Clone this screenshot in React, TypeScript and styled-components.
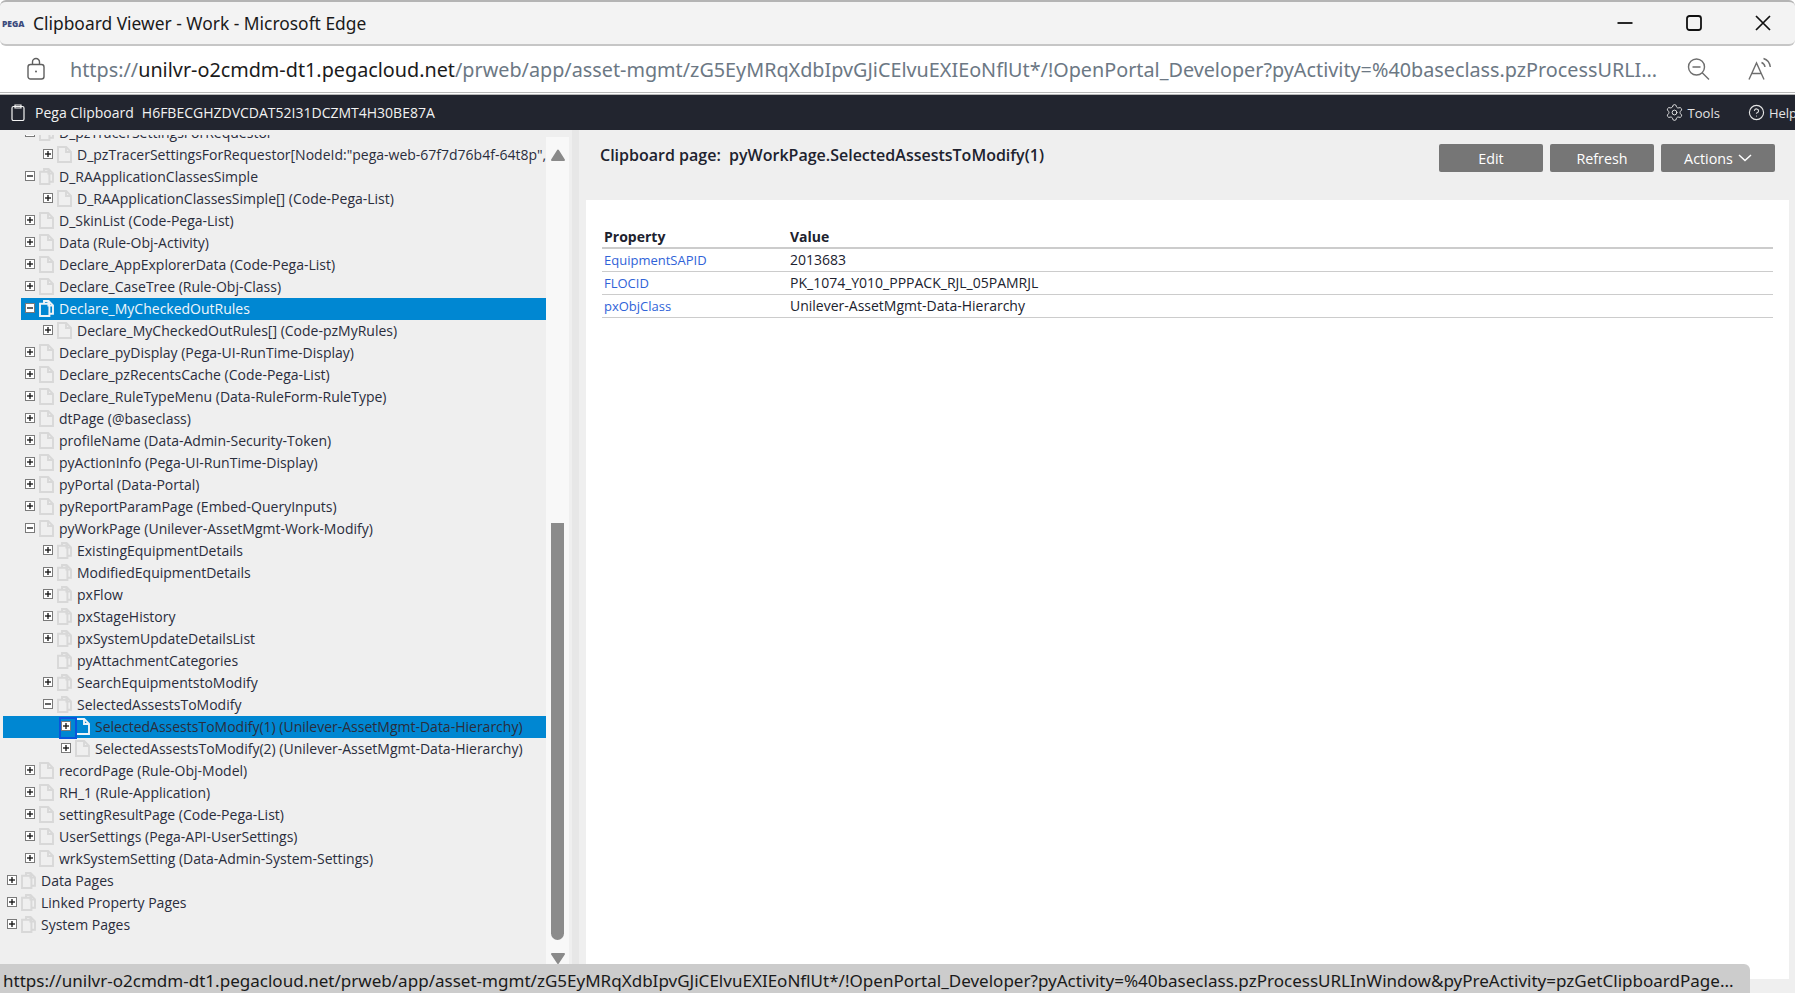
import styled, { createGlobalStyle } from "styled-components";
import { Settings, CircleHelp } from "lucide-react";

const PAGE_URL =
  "https://unilvr-o2cmdm-dt1.pegacloud.net/prweb/app/asset-mgmt/zG5EyMRqXdbIpvGJiCElvuEXIEoNflUt*/!OpenPortal_Developer?pyActivity=%40baseclass.pzProcessURLI...";
const STATUS_URL =
  "https://unilvr-o2cmdm-dt1.pegacloud.net/prweb/app/asset-mgmt/zG5EyMRqXdbIpvGJiCElvuEXIEoNflUt*/!OpenPortal_Developer?pyActivity=%40baseclass.pzProcessURLInWindow&pyPreActivity=pzGetClipboardPage...";

type TreeRow = {
  level: number;
  label: string;
  toggle?: "plus" | "minus";
  stack?: boolean;
  selectedFrom?: number;
  light?: boolean;
  focused?: boolean;
};

const treeRows: TreeRow[] = [
  { level: 1, label: "D_pzTracerSettingsForRequestor", toggle: "minus", stack: true },
  { level: 2, label: 'D_pzTracerSettingsForRequestor[NodeId:"pega-web-67f7d76b4f-64t8p",', toggle: "plus" },
  { level: 1, label: "D_RAApplicationClassesSimple", toggle: "minus", stack: true },
  { level: 2, label: "D_RAApplicationClassesSimple[] (Code-Pega-List)", toggle: "plus" },
  { level: 1, label: "D_SkinList (Code-Pega-List)", toggle: "plus" },
  { level: 1, label: "Data (Rule-Obj-Activity)", toggle: "plus" },
  { level: 1, label: "Declare_AppExplorerData (Code-Pega-List)", toggle: "plus" },
  { level: 1, label: "Declare_CaseTree (Rule-Obj-Class)", toggle: "plus" },
  { level: 1, label: "Declare_MyCheckedOutRules", toggle: "minus", stack: true, selectedFrom: 21, light: true },
  { level: 2, label: "Declare_MyCheckedOutRules[] (Code-pzMyRules)", toggle: "plus" },
  { level: 1, label: "Declare_pyDisplay (Pega-UI-RunTime-Display)", toggle: "plus" },
  { level: 1, label: "Declare_pzRecentsCache (Code-Pega-List)", toggle: "plus" },
  { level: 1, label: "Declare_RuleTypeMenu (Data-RuleForm-RuleType)", toggle: "plus" },
  { level: 1, label: "dtPage (@baseclass)", toggle: "plus" },
  { level: 1, label: "profileName (Data-Admin-Security-Token)", toggle: "plus" },
  { level: 1, label: "pyActionInfo (Pega-UI-RunTime-Display)", toggle: "plus" },
  { level: 1, label: "pyPortal (Data-Portal)", toggle: "plus" },
  { level: 1, label: "pyReportParamPage (Embed-QueryInputs)", toggle: "plus" },
  { level: 1, label: "pyWorkPage (Unilever-AssetMgmt-Work-Modify)", toggle: "minus" },
  { level: 2, label: "ExistingEquipmentDetails", toggle: "plus", stack: true },
  { level: 2, label: "ModifiedEquipmentDetails", toggle: "plus", stack: true },
  { level: 2, label: "pxFlow", toggle: "plus", stack: true },
  { level: 2, label: "pxStageHistory", toggle: "plus", stack: true },
  { level: 2, label: "pxSystemUpdateDetailsList", toggle: "plus", stack: true },
  { level: 2, label: "pyAttachmentCategories", stack: true },
  { level: 2, label: "SearchEquipmentstoModify", toggle: "plus", stack: true },
  { level: 2, label: "SelectedAssestsToModify", toggle: "minus", stack: true },
  { level: 3, label: "SelectedAssestsToModify(1) (Unilever-AssetMgmt-Data-Hierarchy)", toggle: "plus", selectedFrom: 3, focused: true },
  { level: 3, label: "SelectedAssestsToModify(2) (Unilever-AssetMgmt-Data-Hierarchy)", toggle: "plus" },
  { level: 1, label: "recordPage (Rule-Obj-Model)", toggle: "plus" },
  { level: 1, label: "RH_1 (Rule-Application)", toggle: "plus" },
  { level: 1, label: "settingResultPage (Code-Pega-List)", toggle: "plus" },
  { level: 1, label: "UserSettings (Pega-API-UserSettings)", toggle: "plus" },
  { level: 1, label: "wrkSystemSetting (Data-Admin-System-Settings)", toggle: "plus" },
  { level: 0, label: "Data Pages", toggle: "plus", stack: true },
  { level: 0, label: "Linked Property Pages", toggle: "plus", stack: true },
  { level: 0, label: "System Pages", toggle: "plus", stack: true },
];

const properties = [
  { name: "EquipmentSAPID", value: "2013683" },
  { name: "FLOCID", value: "PK_1074_Y010_PPPACK_RJL_05PAMRJL" },
  { name: "pxObjClass", value: "Unilever-AssetMgmt-Data-Hierarchy" },
];

const PageIcon = ({ stack, selected }: { stack?: boolean; selected?: boolean }) => (
  <svg width="15" height="17" viewBox="0 0 15 17" fill="none" stroke={selected ? "#eef3f7" : "#d8d8d8"} strokeWidth="1.9">
    {stack ? (
      <>
        <path d="M5 3.8V1h4.6l4.4 4.4v8.4h-3.6" />
        <path d="M9.4 1v4.6H14" />
        <path d="M1 3.8h9.4V16H1z" />
      </>
    ) : (
      <>
        <path d="M1 1h8.2L14 5.8V16H1z" />
        <path d="M9 1v5h5" />
      </>
    )}
  </svg>
);

const App = () => {
  return (
    <Window>
      <GlobalStyle />
      <TitleBar>
        <LogoText>PEGA</LogoText>
        <WindowTitle>Clipboard Viewer - Work - Microsoft Edge</WindowTitle>
        <WindowControls>
          <svg width="16" height="16" viewBox="0 0 16 16" stroke="#111" strokeWidth="1.8" fill="none">
            <path d="M0.5 8h15" />
          </svg>
          <svg width="16" height="16" viewBox="0 0 16 16" stroke="#111" strokeWidth="1.8" fill="none">
            <rect x="1" y="1" width="14" height="14" rx="2.5" />
          </svg>
          <svg width="16" height="16" viewBox="0 0 16 16" stroke="#111" strokeWidth="1.7" fill="none">
            <path d="M1 1l14 14M15 1L1 15" />
          </svg>
        </WindowControls>
      </TitleBar>

      <AddressBar>
        <svg width="18" height="23" viewBox="0 0 18 23" fill="none" stroke="#5f5f5f" strokeWidth="1.4">
          <rect x="1" y="7.5" width="16" height="14.5" rx="2.5" />
          <path d="M5.5 7.5V5a3.5 3.5 0 0 1 7 0v2.5" />
          <circle cx="9" cy="14.5" r="1" fill="#5f5f5f" stroke="none" />
        </svg>
        <UrlText>
          <UrlMuted>https://</UrlMuted>unilvr-o2cmdm-dt1.pegacloud.net
          <UrlMuted>{PAGE_URL.slice("https://unilvr-o2cmdm-dt1.pegacloud.net".length)}</UrlMuted>
        </UrlText>
        <AddressIcons>
          <svg width="23" height="22" viewBox="0 0 23 22" fill="none" stroke="#6e6e6e" strokeWidth="1.4">
            <circle cx="9.5" cy="9" r="8" />
            <path d="M5.5 9h8M15.2 14.8l6.8 6.6" />
          </svg>
          <svg width="24" height="23" viewBox="0 0 24 23" fill="none" stroke="#6e6e6e" strokeWidth="1.4">
            <path d="M1 22.5L8.5 6l7.5 16.5M3.6 16.5h9.8" />
            <path d="M13.5 5.5c2 .8 3.2 2.4 3.5 4.5M15.5 1.5c3.8 1.2 6.3 4.4 6.8 8.5" />
          </svg>
        </AddressIcons>
      </AddressBar>

      <PortalHeader>
        <svg width="14" height="17" viewBox="0 0 14 17" fill="none" stroke="#f4f4f4" strokeWidth="1.2">
          <rect x="1" y="2.5" width="12" height="14" rx="1.5" />
          <path d="M4 1h6v3H4z" />
        </svg>
        <PortalTitle>Pega Clipboard</PortalTitle>
        <PortalId>H6FBECGHZDVCDAT52I31DCZMT4H30BE87A</PortalId>
        <PortalLinks>
          <PortalLink>
            <Settings size={19} strokeWidth={1.2} />
            Tools
          </PortalLink>
          <PortalLink>
            <CircleHelp size={17} strokeWidth={1.6} />
            Help
          </PortalLink>
        </PortalLinks>
      </PortalHeader>

      <Workspace>
        <TreePane>
          <TreeList>
            {treeRows.map((row) => (
              <Row key={row.label} $level={row.level} $selectedFrom={row.selectedFrom}>
                <ToggleSlot>
                  {row.toggle && (
                    <Toggle $focused={row.focused}>
                      <svg width="8" height="8" viewBox="0 0 8 8" stroke="#111" strokeWidth="1.3">
                        <path d="M1 4h6" />
                        {row.toggle === "plus" && <path d="M4 1v6" />}
                      </svg>
                    </Toggle>
                  )}
                </ToggleSlot>
                <IconSlot>
                  <PageIcon stack={row.stack} selected={row.selectedFrom !== undefined} />
                </IconSlot>
                <RowLabel $light={row.light}>{row.label}</RowLabel>
              </Row>
            ))}
          </TreeList>
        </TreePane>

        <ScrollTrack>
          <svg width="16" height="12" viewBox="0 0 16 12" fill="#8a8a8a" stroke="#8a8a8a" strokeWidth="2" strokeLinejoin="round">
            <path d="M8 1.5l6 9.5H2z" />
          </svg>
          <ScrollThumb />
          <svg width="16" height="11" viewBox="0 0 16 11" fill="#8a8a8a" stroke="#8a8a8a" strokeWidth="2" strokeLinejoin="round">
            <path d="M8 10L2 1h12z" />
          </svg>
        </ScrollTrack>
        <Splitter />

        <DetailPane>
          <DetailHeader>
            <DetailTitle>Clipboard page:&nbsp; pyWorkPage.SelectedAssestsToModify(1)</DetailTitle>
            <ButtonGroup>
              <GrayButton $width={104}>Edit</GrayButton>
              <GrayButton $width={104}>Refresh</GrayButton>
              <GrayButton $width={114}>
                Actions
                <svg width="14" height="8" viewBox="0 0 14 8" fill="none" stroke="#fff" strokeWidth="1.5">
                  <path d="M1 1l6 5.5L13 1" />
                </svg>
              </GrayButton>
            </ButtonGroup>
          </DetailHeader>
          <DetailBody>
            <PropertyTable>
              <thead>
                <tr>
                  <HeadCell>Property</HeadCell>
                  <HeadCell>Value</HeadCell>
                </tr>
              </thead>
              <tbody>
                {properties.map((item) => (
                  <tr key={item.name}>
                    <BodyCell>
                      <PropertyLink>{item.name}</PropertyLink>
                    </BodyCell>
                    <BodyCell>{item.value}</BodyCell>
                  </tr>
                ))}
              </tbody>
            </PropertyTable>
          </DetailBody>
        </DetailPane>
      </Workspace>

      <StatusBubble>{STATUS_URL}</StatusBubble>
    </Window>
  );
};

const GlobalStyle = createGlobalStyle`
  html, body {
    margin: 0;
    padding: 0;
    background: #fff;
  }
  * {
    box-sizing: border-box;
  }
`;

const Window = styled.div`
  position: relative;
  width: 1795px;
  height: 993px;
  display: flex;
  flex-direction: column;
  overflow: hidden;
  font-family: "Open Sans", "Liberation Sans", sans-serif;
`;

const TitleBar = styled.div`
  height: 46px;
  display: flex;
  align-items: center;
  flex-shrink: 0;
  padding-left: 2px;
  background: #f3f3f3;
  border-top: 2px solid #b4b4b4;
  border-bottom: 2px solid #c6c6c6;
  border-radius: 6px 6px 6px 6px;
`;

const LogoText = styled.span`
  width: 31px;
  font-size: 8.5px;
  font-weight: 800;
  color: #3b4a7c;
`;

const WindowTitle = styled.span`
  font-family: "Noto Sans", sans-serif;
  font-size: 17.4px;
  color: #1a1a1a;
`;

const WindowControls = styled.div`
  display: flex;
  align-items: center;
  gap: 53px;
  margin-left: auto;
  padding-right: 24px;
`;

const AddressBar = styled.div`
  height: 49px;
  display: flex;
  align-items: center;
  flex-shrink: 0;
  padding: 1px 23px 2px 27px;
  background: #fff;
  border-bottom: 3px double #b8b8b8;
`;

const UrlText = styled.div`
  width: 1598px;
  margin-left: 25px;
  padding-top: 2px;
  font-family: "Noto Sans", sans-serif;
  font-size: 19.8px;
  color: #1b1b1b;
  white-space: nowrap;
  overflow: hidden;
`;

const UrlMuted = styled.span`
  color: #6c7884;
`;

const AddressIcons = styled.div`
  display: flex;
  align-items: center;
  gap: 38px;
  margin-left: auto;
`;

const PortalHeader = styled.div`
  height: 35px;
  display: flex;
  align-items: center;
  flex-shrink: 0;
  padding-left: 11px;
  background: #22252f;
  color: #f2f2f2;
  font-size: 14px;
`;

const PortalTitle = styled.span`
  margin-left: 10px;
`;

const PortalId = styled.span`
  margin-left: 8px;
`;

const PortalLinks = styled.div`
  display: flex;
  align-items: center;
  gap: 28px;
  margin-left: auto;
  margin-right: -2px;
`;

const PortalLink = styled.span`
  display: flex;
  align-items: center;
  gap: 4px;
  font-size: 13px;
  color: #e4e4e4;
`;

const Workspace = styled.div`
  flex: 1;
  min-height: 0;
  display: flex;
  background: #efefef;
`;

const TreePane = styled.div`
  width: 546px;
  flex-shrink: 0;
  padding-top: 5px;
`;

const TreeList = styled.div`
  height: 100%;
  overflow: hidden;

  & > div:first-child {
    margin-top: -13px;
  }
`;

const Row = styled.div<{ $level: number; $selectedFrom?: number }>`
  height: 22px;
  display: flex;
  align-items: center;
  margin-left: ${(p) => p.$selectedFrom ?? 0}px;
  padding-left: ${(p) => 7 + p.$level * 18 - (p.$selectedFrom ?? 0)}px;
  background: ${(p) => (p.$selectedFrom !== undefined ? "#0087d2" : "transparent")};
  white-space: nowrap;
`;

const ToggleSlot = styled.span`
  width: 14px;
  flex-shrink: 0;
  display: flex;
  align-items: center;
  padding-bottom: 3px;
`;

const Toggle = styled.span<{ $focused?: boolean }>`
  position: relative;
  width: 10px;
  height: 10px;
  display: flex;
  align-items: center;
  justify-content: center;
  background: #fff;
  border: 1px solid #7a7a7a;

  ${(p) =>
    p.$focused &&
    `
    &::after {
      content: "";
      position: absolute;
      left: -3px;
      top: -5px;
      width: 14px;
      height: 18px;
      border: 2px solid #0a55dc;
    }
  `}
`;

const IconSlot = styled.span`
  width: 20px;
  flex-shrink: 0;
  display: flex;
  align-items: center;
  padding: 0 0 2px 0;
`;

const RowLabel = styled.span<{ $light?: boolean }>`
  padding-bottom: 1px;
  font-size: 14px;
  color: ${(p) => (p.$light ? "#eef6fb" : "#2a2d3c")};
`;

const ScrollTrack = styled.div`
  width: 23px;
  margin-top: 7px;
  flex-shrink: 0;
  display: flex;
  flex-direction: column;
  align-items: center;
  padding-top: 12px;
  background: #f8f8f8;
`;

const ScrollThumb = styled.div`
  width: 13px;
  height: 417px;
  margin: 362px 0 13px;
  background: #8b8b8b;
  border-radius: 0 0 7px 7px;
`;

const Splitter = styled.div`
  width: 7px;
  margin-left: 3px;
  flex-shrink: 0;
  background: #e7e7e7;
`;

const DetailPane = styled.div`
  flex: 1;
  min-width: 0;
  display: flex;
  flex-direction: column;
  padding: 0 6px 14px 7px;
`;

const DetailHeader = styled.div`
  height: 70px;
  display: flex;
  justify-content: space-between;
  padding: 14px 14px 0 14px;
`;

const DetailTitle = styled.span`
  font-size: 16px;
  font-weight: 600;
  line-height: 22px;
  color: #20222e;
`;

const ButtonGroup = styled.div`
  display: flex;
  gap: 7px;
`;

const GrayButton = styled.div<{ $width: number }>`
  width: ${(p) => p.$width}px;
  height: 28px;
  display: flex;
  align-items: center;
  justify-content: center;
  gap: 5px;
  background: #767676;
  border-radius: 2px;
  color: #fff;
  font-size: 14.3px;
`;

const DetailBody = styled.div`
  flex: 1;
  padding: 26px 16px 0;
  background: #fff;
`;

const PropertyTable = styled.table`
  width: 100%;
  border-collapse: collapse;
  table-layout: fixed;
`;

const HeadCell = styled.th`
  height: 22px;
  padding: 0 0 0 2px;
  border-bottom: 2px solid #cccccc;
  font-size: 14px;
  font-weight: 700;
  text-align: left;
  color: #20222e;

  &:first-child {
    width: 186px;
  }
`;

const BodyCell = styled.td`
  height: 23px;
  padding: 0 0 0 2px;
  border-bottom: 1px solid #cccccc;
  font-size: 14px;
  color: #20222e;
`;

const PropertyLink = styled.span`
  font-size: 13px;
  color: #2f63d8;
`;

const StatusBubble = styled.div`
  position: absolute;
  left: 0;
  bottom: 0;
  width: 1750px;
  height: 29px;
  padding-left: 3px;
  background: #cccccc;
  border-radius: 0 6px 0 0;
  font-family: "Noto Sans", sans-serif;
  font-size: 17.05px;
  line-height: 34px;
  color: #1a1a1a;
  white-space: nowrap;
  overflow: hidden;
`;

export default App;
